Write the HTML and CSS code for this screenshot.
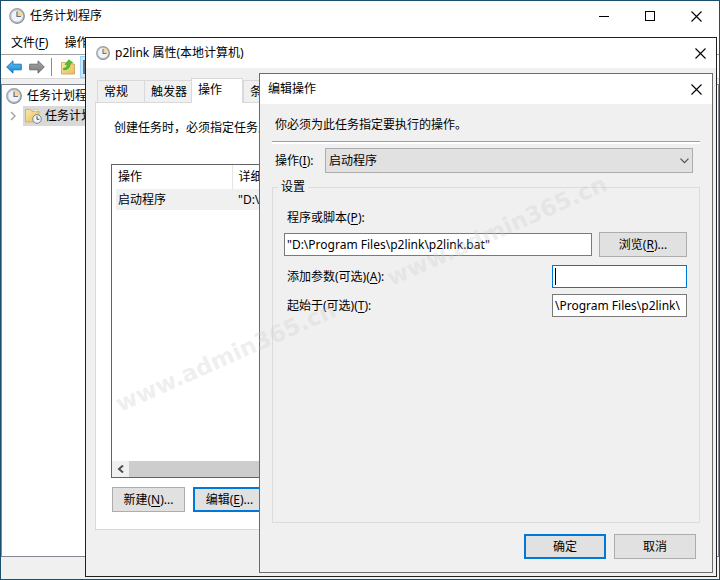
FILE: index.html
```html
<!DOCTYPE html>
<html lang="zh-CN">
<head>
	<meta charset="utf-8">
	<title>任务计划程序</title>
	<link rel="stylesheet" href="styles.css">
</head>
<body>
<svg class="defs" aria-hidden="true">
	<defs>
		<linearGradient id="rim" x1="0" y1="0" x2="1" y2="1">
			<stop offset="0" stop-color="#a9aeb2"/>
			<stop offset="1" stop-color="#7b8186"/>
		</linearGradient>
		<linearGradient id="blue" x1="0" y1="0" x2="0" y2="1">
			<stop offset="0" stop-color="#5cc4f5"/>
			<stop offset="1" stop-color="#1583d6"/>
		</linearGradient>
		<linearGradient id="grey" x1="0" y1="0" x2="0" y2="1">
			<stop offset="0" stop-color="#a6a6a6"/>
			<stop offset="1" stop-color="#7c7c7c"/>
		</linearGradient>
		<linearGradient id="folder" x1="0" y1="0" x2="1" y2="1">
			<stop offset="0" stop-color="#fbe9a9"/>
			<stop offset="1" stop-color="#e3bd5c"/>
		</linearGradient>
	</defs>
	<symbol id="clock" viewBox="0 0 16 16">
		<circle cx="8" cy="8" r="7.3" fill="#c3c8cc" stroke="url(#rim)" stroke-width="1.2"/>
		<circle cx="8" cy="8" r="5.6" fill="#eef4fa"/>
		<path d="M8 8V2.400A5.600 5.600 0 0 1 13.600 8z" fill="#f5d69b"/>
		<path d="M8 3.500V8.500h4" fill="none" stroke="#6a7076" stroke-width="1.200"/>
	</symbol>
	<symbol id="close" viewBox="0 0 11 11">
		<path d="M.5 .5l10 10M10.5 .5l-10 10" stroke="#000" stroke-width="1.1"/>
	</symbol>
</svg>

<div class="window main">
	<div class="titlebar">
		<svg class="icon"><use href="#clock"/></svg>
		<span class="title">任务计划程序</span>
		<button class="caption" aria-label="最小化"><svg width="11" height="11"><path d="M0 5.5h10" stroke="#000"/></svg></button>
		<button class="caption" aria-label="最大化"><svg width="11" height="11"><rect x=".5" y=".5" width="9" height="9" fill="none" stroke="#000"/></svg></button>
		<button class="caption" aria-label="关闭"><svg width="11" height="11"><use href="#close"/></svg></button>
	</div>
	<div class="menu">
		<button>文件(<u>F</u>)</button>
		<button>操作(<u>A</u>)</button>
	</div>
	<div class="toolbar">
		<button aria-label="后退"><svg width="16" height="14" viewBox="0 0 16 14"><path d="M.7 7L7 .8v3.400h8.300v5.600H7v3.400z" fill="url(#blue)" stroke="#1c6fb4" stroke-width=".9"/></svg></button>
		<button aria-label="前进"><svg width="16" height="14" viewBox="0 0 16 14"><path d="M15.300 7L9 .8v3.400H.7v5.600H9v3.400z" fill="url(#grey)" stroke="#686868" stroke-width=".9"/></svg></button>
		<span class="sep"></span>
		<button class="up" aria-label="向上"><svg width="16" height="16" viewBox="0 0 16 16"><path d="M1.500 3.500h4l1 1.500H14.500v10h-13z" fill="url(#folder)" stroke="#c9a24a" stroke-width=".8"/><path d="M3.500 9.500C6 9.200 7.500 7.500 7.200 5L5 5.500 8.800 .8 12.800 3.800 10 4.400C10.600 8 8 11 3.500 10.800z" fill="#56c22f" stroke="#2f9a17" stroke-width=".6"/></svg></button>
		<button class="pressed" aria-label="显示树"><svg width="16" height="16"><rect x="1" y="2" width="13" height="12" fill="#fff" stroke="#66707a" stroke-width="2"/></svg></button>
	</div>
	<div class="tree">
		<div class="node">
			<svg class="icon"><use href="#clock"/></svg>
			<span>任务计划程序 (本地)</span>
		</div>
		<div class="node child">
			<svg width="6" height="10" viewBox="0 0 6 10"><path d="M1 1l4 4-4 4" fill="none" stroke="#a0a0a0" stroke-width="1.400"/></svg>
			<div class="picked">
				<svg width="17" height="16" viewBox="0 0 17 16"><path d="M.5 1.500h5l1.500 2H14V14H.5z" fill="url(#folder)" stroke="#d0aa55" stroke-width=".8"/><path d="M8 2h5v1.500H8z" fill="#fff" stroke="#d0aa55" stroke-width=".5"/><circle cx="12" cy="11" r="4.300" fill="#eef4f8" stroke="#7c858c"/><path d="M12 8.300V11.300h2.300" fill="none" stroke="#3c5468"/></svg>
				<span>任务计划程序库</span>
			</div>
		</div>
	</div>
	<div class="status"></div>
</div>

<div class="window props">
	<div class="titlebar">
		<svg class="icon"><use href="#clock"/></svg>
		<span class="title">p2link 属性(本地计算机)</span>
		<button class="caption" aria-label="关闭"><svg width="11" height="11"><use href="#close"/></svg></button>
	</div>
	<div class="tabs">
		<button>常规</button>
		<button>触发器</button>
		<button class="selected">操作</button>
		<button>条件</button>
	</div>
	<div class="panel">
		<p>创建任务时，必须指定任务启动时发生的操作。</p>
		<div class="list">
			<table>
				<tr><th>操作</th><th>详细信息</th></tr>
				<tr class="row"><td>启动程序</td><td>"D:\Program Files\p2link\p2link.bat"</td></tr>
			</table>
			<div class="scroll">
				<button aria-label="向左滚动"><svg width="7" height="8" viewBox="0 0 7 8"><path d="M6 .5L2 4l4 3.500" fill="none" stroke="#505050" stroke-width="2"/></svg></button>
				<div class="thumb"></div>
			</div>
		</div>
		<div class="actions">
			<button class="btn">新建(<u>N</u>)...</button>
			<button class="btn default">编辑(<u>E</u>)...</button>
		</div>
	</div>
</div>

<div class="window edit">
	<div class="titlebar">
		<span class="title">编辑操作</span>
		<button class="caption" aria-label="关闭"><svg width="11" height="11"><use href="#close"/></svg></button>
	</div>
	<form class="content">
		<p>你必须为此任务指定要执行的操作。</p>
		<hr>
		<div class="choose">
			<label for="action">操作(<u>I</u>):</label>
			<div class="combo">
				<select id="action"><option>启动程序</option></select>
				<svg width="9" height="6" viewBox="0 0 9 6"><path d="M.5 .7l4 4 4-4" fill="none" stroke="#505050" stroke-width="1.200"/></svg>
			</div>
		</div>
		<fieldset>
			<legend>设置</legend>
			<label for="script">程序或脚本(<u>P</u>):</label>
			<div class="line">
				<input id="script" type="text" value="&quot;D:\Program Files\p2link\p2link.bat&quot;">
				<button type="button" class="btn">浏览(<u>R</u>)...</button>
			</div>
			<div class="line">
				<label for="args">添加参数(可选)(<u>A</u>):</label>
				<div class="short focus"><input id="args" type="text"></div>
			</div>
			<div class="line">
				<label for="start">起始于(可选)(<u>T</u>):</label>
				<div class="short"><input id="start" type="text" value="\Program Files\p2link\"></div>
			</div>
		</fieldset>
		<div class="footer">
			<button type="button" class="btn default">确定</button>
			<button type="button" class="btn">取消</button>
		</div>
	</form>
</div>

<div class="watermark first">www.admin365.cn</div>
<div class="watermark second">www.admin365.cn</div>
</body>
</html>
```
FILE: styles.css
```css
*{
	box-sizing: border-box;
}
body{
	margin: 0;
	height: 100vh;
	overflow: hidden;
	position: relative;
	font: 12px/16px "Noto Sans","Noto Sans CJK SC",sans-serif;
	color: #000;
}
button,input,select{
	font: inherit;
	color: inherit;
	margin: 0;
	border-radius: 0;
	outline: none;
}
button{
	border: none;
	background: none;
	padding: 0;
	white-space: nowrap;
}
p{
	margin: 0;
	white-space: nowrap;
}
u{
	text-underline-offset: 2px;
}
svg{
	display: block;
	flex: none;
}
.defs{
	position: absolute;
	width: 0;
	height: 0;
}
.icon{
	width: 16px;
	height: 16px;
}

/* windows */
.window{
	position: absolute;
	display: flex;
	flex-direction: column;
	background: #f0f0f0;
	overflow: hidden;
	white-space: nowrap;
}
.main{
	inset: 0;
	border: 1px solid #1b4f6e;
}
.props{
	left: 85px;
	top: 37px;
	right: 3px;
	bottom: 3px;
	border: 1px solid #202020;
}
.edit{
	left: 259px;
	top: 73px;
	right: 7px;
	bottom: 7px;
	border: 1px solid #6b6b6b;
}
.titlebar{
	display: flex;
	align-items: center;
	flex: none;
	height: 30px;
	background: #fff;
	padding-left: 8px;
}
.title{
	flex: 1;
	padding-left: 5px;
}
.caption{
	width: 46px;
	height: 30px;
	display: flex;
	align-items: center;
	justify-content: center;
}
.props .titlebar{
	padding-left: 10px;
}
.props .icon{
	width: 14px;
	height: 14px;
}
.props .caption,.edit .caption{
	width: 31px;
}
.edit .titlebar{
	padding-left: 3px;
}

/* main window */
.menu{
	display: flex;
	gap: 16px;
	height: 24px;
	padding-left: 10px;
	background: #fff;
	border-bottom: 1px solid #a0a0a0;
}
.toolbar{
	display: flex;
	align-items: center;
	height: 24px;
	padding-left: 5px;
	gap: 7px;
	background: #fff;
	border-bottom: 1px solid #d9d9d9;
}
.toolbar .sep{
	width: 1px;
	height: 18px;
	margin-left: -1px;
	background: #8c8c8c;
}
.toolbar .up{
	padding-left: 1px;
}
.toolbar .pressed{
	margin-left: -3px;
	padding: 2px;
	background: #cce8ff;
	border: 1px solid #99d1ff;
}
.tree{
	flex: 1;
	margin-top: 5px;
	padding-top: 1px;
	background: #fff;
	border: 1px solid #828790;
}
.node{
	display: flex;
	align-items: center;
	height: 20px;
	padding-left: 4px;
	gap: 5px;
}
.child{
	padding-left: 8px;
	gap: 7px;
}
.picked{
	display: flex;
	align-items: center;
	height: 20px;
	padding: 0 3px 0 2px;
	gap: 3px;
	background: #d9d9d9;
}
.status{
	height: 22px;
}

/* properties dialog */
.tabs{
	display: flex;
	align-items: flex-end;
	height: 34px;
	padding-left: 11px;
}
.tabs button{
	height: 22px;
	padding: 0 4px 0 6px;
	border: 1px solid #d9d9d9;
	border-width: 1px 0 0 1px;
	min-width: 47px;
	text-align: left;
}
.tabs .selected{
	position: relative;
	height: 25px;
	width: 52px;
	margin-bottom: -1px;
	padding-bottom: 2px;
	border-right-width: 1px;
	background: #fff;
}
.panel{
	flex: 1;
	display: flex;
	flex-direction: column;
	margin: 0 9px 46px;
	padding: 17px 15px;
	background: #fff;
	border: 1px solid #d9d9d9;
}
.panel p{
	padding-left: 3px;
}
.list{
	flex: 1;
	display: flex;
	flex-direction: column;
	justify-content: space-between;
	margin: 28px 0 9px;
	border: 1px solid #646464;
}
.list table{
	width: 100%;
	border-collapse: collapse;
	table-layout: fixed;
}
.list th,.list td{
	padding: 0 6px;
	text-align: left;
	font-weight: normal;
}
.list th{
	height: 24px;
	border-right: 1px solid #e5e5e5;
}
.list th:first-child{
	width: 120px;
}
.list td{
	height: 21px;
}
.row{
	background: linear-gradient(#f0f0f0,#f0f0f0) 4px 0 no-repeat;
}
.scroll{
	display: flex;
	height: 16px;
	background: #f0f0f0;
}
.scroll button{
	width: 17px;
	padding-left: 5px;
}
.thumb{
	width: 70%;
	background: #cdcdcd;
}
.actions{
	display: flex;
	gap: 8px;
	padding-left: 1px;
}
.btn{
	height: 25px;
	width: 88px;
	background: #e1e1e1;
	border: 1px solid #adadad;
}
.actions .btn{
	width: 73px;
}
.btn.default{
	border: 2px solid #0078d7;
}

/* edit dialog */
.content{
	flex: 1;
	display: flex;
	flex-direction: column;
	padding: 13px 12px;
}
.content p{
	padding-left: 3px;
}
hr{
	width: 100%;
	height: 3px;
	margin: 8px 0 4px;
	border: none;
	border-top: 1px solid #a0a0a0;
	background: #fff;
}
.choose{
	display: flex;
	align-items: center;
	padding: 0 7px 0 3px;
}
.choose label{
	width: 50px;
}
.combo{
	flex: 1;
	position: relative;
}
.combo select{
	display: block;
	appearance: none;
	width: 100%;
	height: 25px;
	padding: 0 3px;
	background: #e1e1e1;
	border: 1px solid #adadad;
}
.combo svg{
	position: absolute;
	right: 4px;
	top: 10px;
	pointer-events: none;
}
fieldset{
	flex: 1;
	margin: 6px 0 11px;
	padding: 15px 12px 0 11px;
	min-width: 0;
	border: 1px solid #dcdcdc;
}
legend{
	margin-left: -6px;
	padding: 0 3px;
}
fieldset label{
	padding-left: 3px;
}
.line{
	display: flex;
	align-items: center;
	justify-content: space-between;
	gap: 7px;
	margin-top: 6px;
}
.line:first-of-type{
	margin-bottom: 8px;
}
input{
	height: 23px;
	padding: 0 2px;
	background: #fff;
	border: 1px solid #7a7a7a;
}
.line > input{
	flex: 1;
	min-width: 0;
}
.short{
	position: relative;
	width: 135px;
}
.short input{
	display: block;
	width: 100%;
}
.focus input{
	border-color: #0078d7;
}
.focus::after{
	content: "";
	position: absolute;
	left: 3px;
	top: 3px;
	width: 1px;
	height: 17px;
	background: #000;
}
.footer{
	display: flex;
	justify-content: flex-end;
	gap: 8px;
	padding-right: 4px;
}
.footer .btn{
	width: 82px;
}

.watermark{
	position: absolute;
	font: bold 23px/24px "DejaVu Sans",sans-serif;
	color: rgba(205,205,205,.33);
	transform: rotate(-24deg);
	transform-origin: 0 100%;
	white-space: nowrap;
	pointer-events: none;
}
.first{
	left: 122px;
	top: 392px;
}
.second{
	left: 393px;
	top: 266px;
}
```
